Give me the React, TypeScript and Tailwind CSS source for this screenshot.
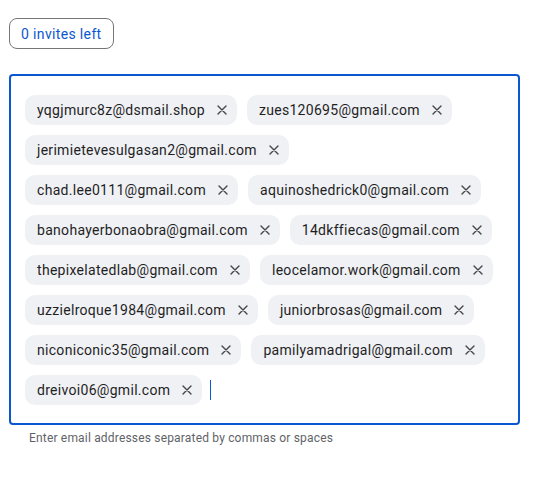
import React from 'react';

const EMAILS = [
  'yqgjmurc8z@dsmail.shop',
  'zues120695@gmail.com',
  'jerimietevesulgasan2@gmail.com',
  'chad.lee0111@gmail.com',
  'aquinoshedrick0@gmail.com',
  'banohayerbonaobra@gmail.com',
  '14dkffiecas@gmail.com',
  'thepixelatedlab@gmail.com',
  'leocelamor.work@gmail.com',
  'uzzielroque1984@gmail.com',
  'juniorbrosas@gmail.com',
  'niconiconic35@gmail.com',
  'pamilyamadrigal@gmail.com',
  'dreivoi06@gmil.com',
];

function CloseIcon() {
  return (
    <svg width="10" height="10" viewBox="0 0 10 10" className="text-[#444746]">
      <path d="M1 1L9 9M9 1L1 9" stroke="currentColor" strokeWidth="1.4" strokeLinecap="round" />
    </svg>
  );
}

export default function App() {
  return (
    <div className="w-[541px] h-[483px] bg-white pl-[9px] pt-[18px] font-['Roboto','Liberation_Sans',sans-serif]">
      <button className="h-[31px] px-[11px] rounded-[8px] border border-[#747775] text-[14px] tracking-[0.35px] text-[#0b57d0] leading-none">
        0 invites left
      </button>

      {/* Recipient field */}
      <div className="mt-[25px] w-[511px] h-[351px] border-2 border-[#0b57d0] rounded-[4px] pt-[19px] pl-[14px] pr-[14px]">
        <div className="flex flex-wrap gap-x-[10px] gap-y-[10px] items-center">
          {EMAILS.map(email => (
            <span
              key={email}
              className="h-[30px] flex items-center gap-[12px] pl-[12px] pr-[10px] rounded-[10px] bg-[#eff1f5] text-[14px] tracking-[0.3px] text-[#1f1f1f]"
            >
              {email}
              <CloseIcon />
            </span>
          ))}
          <span className="h-[20px] w-px bg-[#0b57d0] ml-[-2px]" />
        </div>
      </div>

      <p className="mt-[4px] pl-[20px] text-[12px] tracking-[0.18px] text-[#5f6368]">
        Enter email addresses separated by commas or spaces
      </p>
    </div>
  );
}
